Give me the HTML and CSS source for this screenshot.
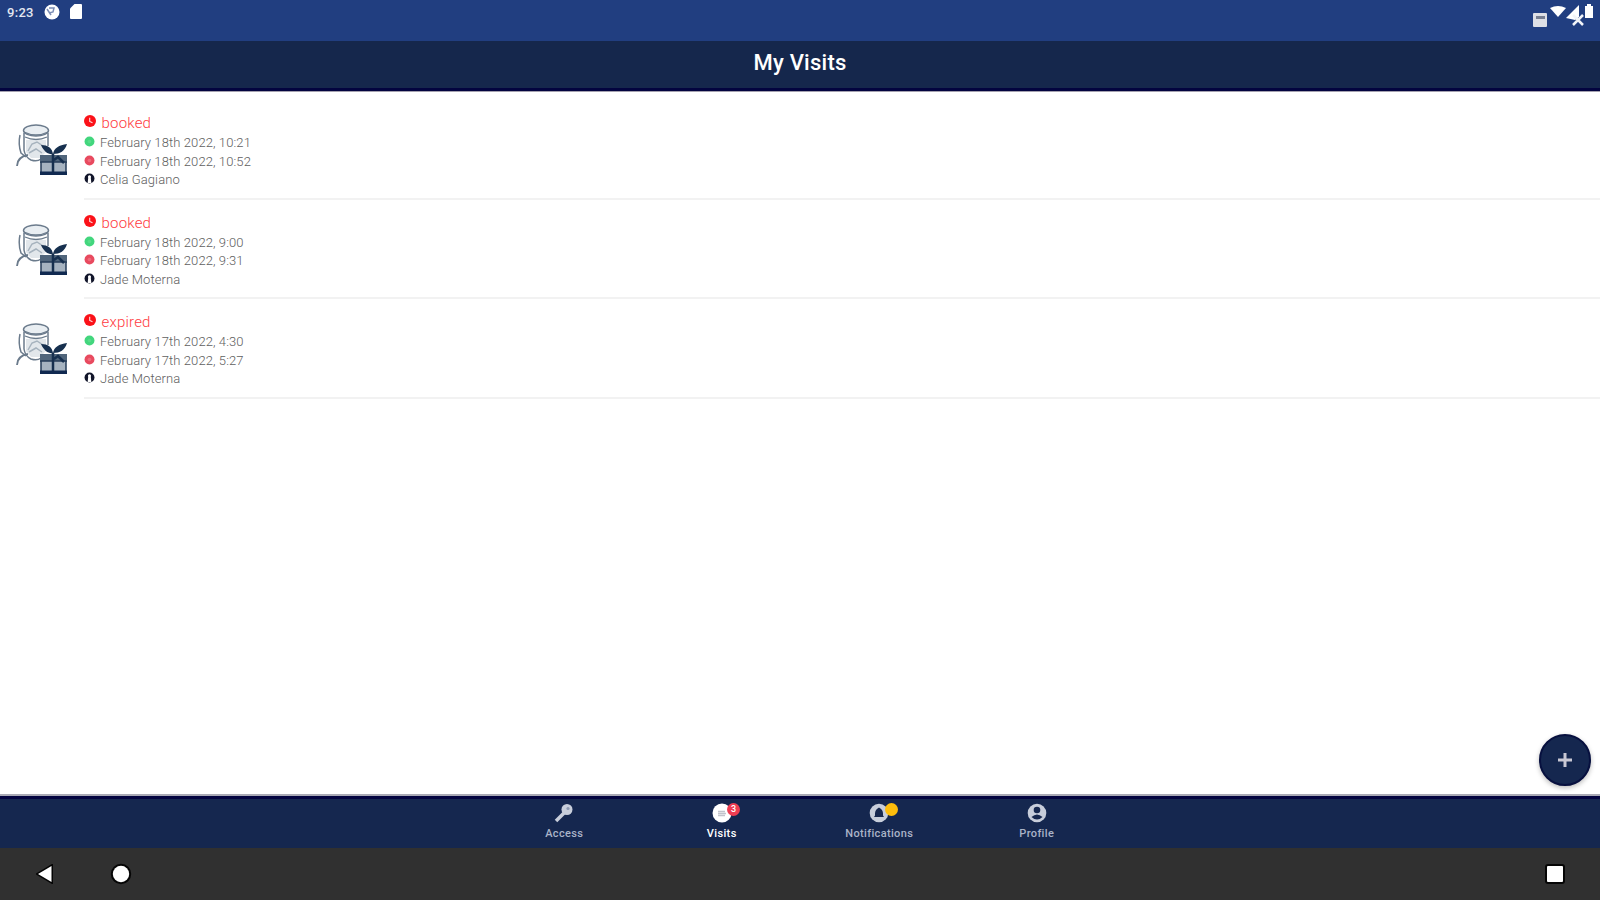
FILE: index.html
```html
<!DOCTYPE html>
<html lang="en">
<head>
<meta charset="utf-8">
<title>My Visits</title>
<link rel="stylesheet" href="styles.css">
</head>
<body>
<svg class="defs" width="0" height="0" aria-hidden="true">
  <symbol id="gift" viewBox="0 0 54 54">
    <g fill="none" stroke="#6b7b8c" stroke-width="1.5">
      <ellipse cx="20" cy="7.500" rx="12.500" ry="5.500" fill="#e9eef2"/>
      <path d="M8 9q12 6 24 0M9 14q11 5 22 0" stroke-width="1.300"/>
      <path d="M8 10v17q1 7 7 10 6 2 10-1M32 10v13M4 12q-2 9 1 18l5 4"/>
      <path d="M12 28l4-7 5-2 6 4 3 5M13 30l7-4 6 4" stroke="#8796a4"/>
      <path d="M12 32Q1 34 1 43" stroke-width="1.800"/>
    </g>
    <path d="M10 17h20v12l-6 6h-9l-5-6z" fill="#c6d0d8" opacity=".5"/>
    <path d="M37 31c-4 1-9-2-12-9 7 0 11 3 12 9zM37 31c1-6 6-9 14-10-2 7-7 10-14 10z" fill="#17304f"/>
    <path d="M24 32h27v8H24z" fill="#50657b"/>
    <path d="M25 39h25v12H25z" fill="#a6b3c0" stroke="#263d58" stroke-width="1.500"/>
    <path d="M37 31v18M38 37l4-3 6 6" stroke="#17304f" stroke-width="2.500" fill="none"/>
    <path d="M24 48.500h27V52H24z" fill="#102950"/>
  </symbol>
  <symbol id="alarm" viewBox="0 0 12 12">
    <circle cx="6" cy="6" r="6" fill="#fb1118"/>
    <path d="M5.700 2.700v3.700l2.800 1.400" fill="none" stroke="#fff" stroke-width="1.100" opacity=".85"/>
  </symbol>
  <symbol id="start" viewBox="0 0 12 12">
    <circle cx="6" cy="6" r="5.400" fill="#42d67d"/><circle cx="6" cy="6" r="2" fill="#58da8b"/>
  </symbol>
  <symbol id="end" viewBox="0 0 12 12">
    <circle cx="6" cy="6" r="5.400" fill="#e84a5f"/><circle cx="6" cy="6" r="2" fill="#ee6a7b"/>
  </symbol>
  <symbol id="person" viewBox="0 0 12 12">
    <circle cx="6" cy="6" r="5.400" fill="#11152a"/>
    <path d="M6 2.500a1.700 1.700 0 0 1 1.400 2.700l.6 5.600H4l.6-5.600A1.700 1.700 0 0 1 6 2.500z" fill="#fff"/>
  </symbol>
</svg>
<div class="screen">
  <div class="status">
    <span class="clock">9:23</span>
    <svg class="status-dnd" width="16" height="16" viewBox="0 0 16 16"><circle cx="8" cy="8" r="7.500" fill="#fff"/><path d="M3 5l4 6M5 4h5l-1 4-4 1" fill="none" stroke="#7b8db5" stroke-width="1.500"/></svg>
    <svg class="status-card" width="12" height="15" viewBox="0 0 12 15"><path d="M4.500 0H11q1 0 1 1v13q0 1-1 1H1q-1 0-1-1V4.500z" fill="#fff"/></svg>
    <svg class="status-right" width="62" height="24" viewBox="0 0 62 24">
      <rect x="1" y="10" width="14" height="14" rx="1" fill="#dedfe5"/><path d="M4 13h9v3H4z" fill="#777e90"/>
      <path d="M18 5q8-4 16 0l-8 9z" fill="#fff"/>
      <path d="M34 15L47 2v12l-4 3z" fill="#fff"/><path d="M41 12l10 10M51 12L41 22" stroke="#f2f4f8" stroke-width="2.500"/>
      <path d="M53 3h2V1h4v2h2v12H53z" fill="#fff"/>
    </svg>
  </div>
  <header class="header"><h1 class="title">My Visits</h1></header>
  <main class="list">
    <article class="visit">
      <svg class="thumb"><use href="#gift"/></svg>
      <div class="details">
        <div class="state"><svg class="state-icon"><use href="#alarm"/></svg><span>booked</span></div>
        <div class="line"><svg class="icon"><use href="#start"/></svg><span>February 18th 2022, 10:21</span></div>
        <div class="line"><svg class="icon"><use href="#end"/></svg><span>February 18th 2022, 10:52</span></div>
        <div class="line"><svg class="icon"><use href="#person"/></svg><span>Celia Gagiano</span></div>
      </div>
    </article>
    <article class="visit">
      <svg class="thumb"><use href="#gift"/></svg>
      <div class="details">
        <div class="state"><svg class="state-icon"><use href="#alarm"/></svg><span>booked</span></div>
        <div class="line"><svg class="icon"><use href="#start"/></svg><span>February 18th 2022, 9:00</span></div>
        <div class="line"><svg class="icon"><use href="#end"/></svg><span>February 18th 2022, 9:31</span></div>
        <div class="line"><svg class="icon"><use href="#person"/></svg><span>Jade Moterna</span></div>
      </div>
    </article>
    <article class="visit">
      <svg class="thumb"><use href="#gift"/></svg>
      <div class="details">
        <div class="state"><svg class="state-icon"><use href="#alarm"/></svg><span>expired</span></div>
        <div class="line"><svg class="icon"><use href="#start"/></svg><span>February 17th 2022, 4:30</span></div>
        <div class="line"><svg class="icon"><use href="#end"/></svg><span>February 17th 2022, 5:27</span></div>
        <div class="line"><svg class="icon"><use href="#person"/></svg><span>Jade Moterna</span></div>
      </div>
    </article>
    <button class="fab" aria-label="Add visit"><svg width="16" height="16" viewBox="0 0 16 16"><path d="M8 1v14M1 8h14" stroke="#c9c8d4" stroke-width="3"/></svg></button>
  </main>
  <nav class="tabs">
    <div class="tab"><svg width="20" height="20" viewBox="0 0 20 20"><path d="M2 18L11 9" stroke="#c8cedb" stroke-width="3.500"/><circle cx="13" cy="6.500" r="5.500" fill="#c8cedb"/><circle cx="14" cy="5.500" r="1.600" fill="#8c98b0"/></svg><span>Access</span></div>
    <div class="tab active"><svg width="20" height="20" viewBox="0 0 20 20"><circle cx="10" cy="10" r="9.500" fill="#fff"/><path d="M6 8.500h7M6 10.500h8M6 12.500h7" stroke="#c2c4cc" stroke-width="1.300"/></svg><i class="badge red">3</i><span>Visits</span></div>
    <div class="tab"><svg width="20" height="20" viewBox="0 0 20 20"><circle cx="10" cy="10" r="9.300" fill="#c8cedb"/><path d="M10 4.500q4 2 4 6v2l1 1.500H5l1-1.500v-2q0-4 4-6z" fill="#17284f"/></svg><i class="badge yellow"></i><span>Notifications</span></div>
    <div class="tab"><svg width="20" height="20" viewBox="0 0 20 20"><circle cx="10" cy="10" r="9.300" fill="#c8cedb"/><circle cx="10" cy="7" r="3.300" fill="#17284f"/><path d="M4.500 14q5.500-5 11 0-5.500 5-11 0z" fill="#17284f"/></svg><span>Profile</span></div>
  </nav>
  <footer class="system">
    <svg width="18" height="20" viewBox="0 0 18 20"><path d="M2 10L15.500 2v16z" fill="#fff" stroke="#050505" stroke-width="3" paint-order="stroke"/></svg>
    <svg class="home" width="22" height="22" viewBox="0 0 22 22"><circle cx="11" cy="11" r="8.200" fill="#fff" stroke="#050505" stroke-width="4" paint-order="stroke"/></svg>
    <svg class="recent" width="22" height="22" viewBox="0 0 22 22"><rect x="3" y="3" width="16" height="16" rx="1" fill="#fff" stroke="#050505" stroke-width="4" paint-order="stroke"/></svg>
  </footer>
</div>
</body>
</html>
```
FILE: styles.css
```css
* { box-sizing: border-box; }
body { margin: 0; font-family: Roboto, "Liberation Sans", sans-serif; background: #fff; }
.defs { display: block; }
.screen { width: 1600px; height: 900px; display: flex; flex-direction: column; overflow: hidden; }
.status { height: 41px; flex: none; display: flex; align-items: flex-start; padding: 0 6px 0 7px; background: #213e80; color: #e3e7f1; }
.clock { width: 37px; font-size: 13px; line-height: 15px; padding-top: 5px; letter-spacing: .3px; font-weight: 500; }
.status-dnd { margin-top: 4px; }
.status-card { margin: 4px 0 0 10px; }
.status-right { margin: 3px 0 0 auto; }
.header { height: 50px; flex: none; display: flex; justify-content: center; background: #15274c; border-bottom: 3px solid #03043f; }
.title { margin: 0; padding-top: 9px; font-size: 22px; line-height: 26px; font-weight: 500; letter-spacing: .25px; color: #fff; }
.list { flex: 1; min-height: 0; position: relative; padding-top: 8px; border-top: 1px solid #a5a2b0; }
.visit { height: 99.5px; display: flex; padding-left: 16px; }
.thumb { width: 54px; height: 54px; margin: 23px 14px 0 0; flex: none; }
.details { flex: 1; padding-top: 12px; border-bottom: 2px solid #f2f2f2; }
.state { display: flex; align-items: center; height: 22px; gap: 5.500px; color: #ff3b42; font-size: 15px; line-height: 22px; font-weight: 300; letter-spacing: .2px; }
.state-icon { width: 12px; height: 12px; margin-top: -4px; }
.line { display: flex; align-items: center; height: 18.600px; gap: 5px; color: #606060; font-size: 13px; line-height: 18.600px; font-weight: 300; letter-spacing: .1px; }
.icon { width: 11px; height: 11px; margin-top: -3px; }
.fab { position: absolute; right: 9px; bottom: 8px; width: 52px; height: 52px; display: grid; place-items: center; padding: 0; border: 2px solid #07103f; border-radius: 50%; background: #15274f; box-shadow: 0 2px 5px #0004; }
.tabs { height: 54px; flex: none; display: flex; justify-content: center; padding-left: 1px; background: #15274f; border-top: 2px solid #aaaab5; box-shadow: inset 0 3px #03043f; }
.tab { position: relative; width: 157.500px; display: flex; flex-direction: column; align-items: center; padding-top: 7px; color: #aab3c8; font-size: 11px; line-height: 14px; font-weight: 500; letter-spacing: .35px; }
.tab span { margin-top: 4px; }
.tab.active { color: #fff; }
.badge { position: absolute; left: 84px; top: 7px; width: 13px; height: 13px; border-radius: 50%; color: #fff; font-size: 9px; line-height: 13px; font-style: normal; text-align: center; letter-spacing: 0; }
.red { background: #ee3d52; }
.yellow { background: #fdbd0c; }
.system { height: 52px; flex: none; display: flex; align-items: center; padding: 0 34px 0 36px; background: #303030; }
.home { margin-left: 56px; }
.recent { margin-left: auto; }
```
